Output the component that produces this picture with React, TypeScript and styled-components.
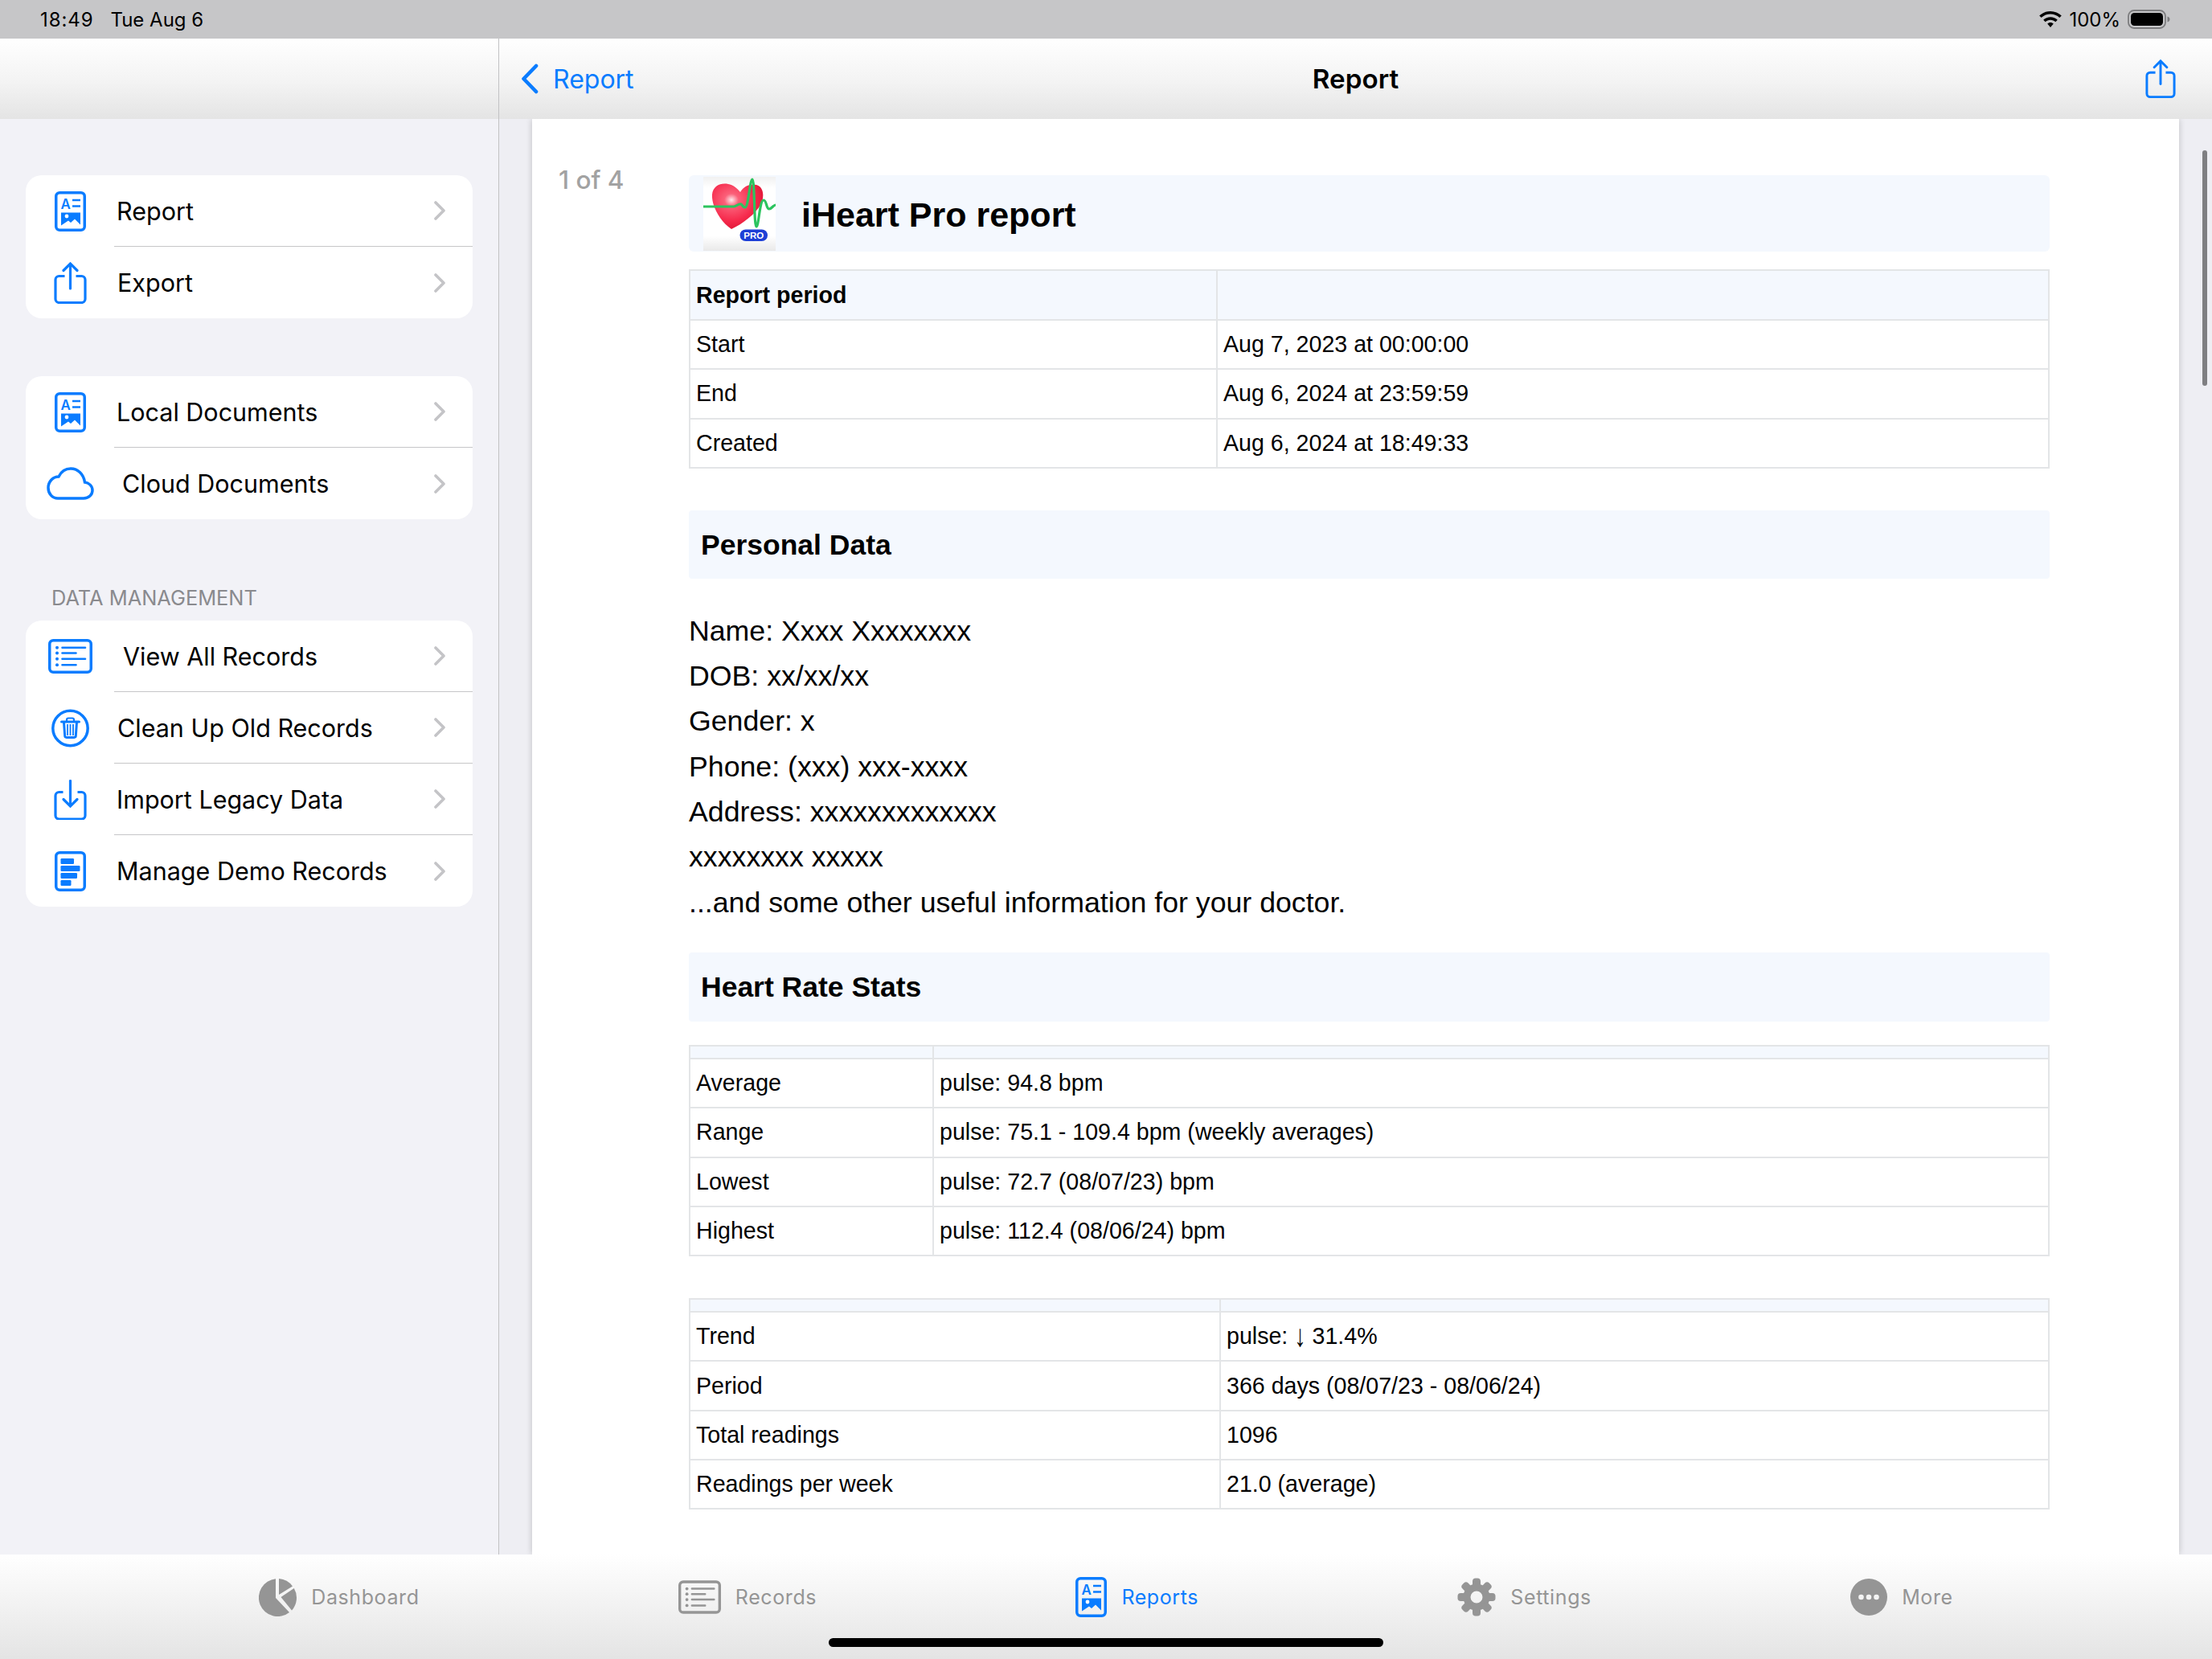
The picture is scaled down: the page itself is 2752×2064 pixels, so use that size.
import React from "react";
import styled, { createGlobalStyle } from "styled-components";

const BLUE = "#0a7cff";
const GRAY = "#959595";
const TINT = "#f4f8fe";
const RULE = "#e3e5e7";
const UI_FONT = `Inter, "Liberation Sans", sans-serif`;
const DOC_FONT = `"Liberation Sans", Arial, sans-serif`;

const GlobalStyle = createGlobalStyle`
  html, body {
    margin: 0;
    padding: 0;
    background: #f2f2f7;
  }
`;

const Screen = styled.div`
  width: 2752px;
  height: 2064px;
  display: flex;
  flex-direction: column;
  overflow: hidden;
  font-family: ${UI_FONT};
  color: #000;
`;

const StatusBar = styled.div`
  height: 48px;
  flex: none;
  background: #c6c6c8;
  display: flex;
  align-items: center;
  justify-content: space-between;
  padding: 0 52px 0 50px;
  font-size: 24px;
`;

const StatusGroup = styled.div<{ $gap: number }>`
  display: flex;
  align-items: center;
  gap: ${(p) => p.$gap}px;
`;

const StatusTime = styled.span`
  letter-spacing: 0.9px;
`;

const Panes = styled.div`
  flex: 1;
  min-height: 0;
  display: flex;
`;

const Sidebar = styled.aside`
  width: 620px;
  flex: none;
  background: #f2f2f7;
  border-right: 1px solid #c2c2c4;
`;

const NavBar = styled.div`
  height: 100px;
  background: linear-gradient(#ffffff, #f3f3f3 55%, #e4e4e4);
`;

const SideList = styled.div`
  padding: 70px 32px 0;
`;

const Card = styled.div<{ $gapAbove?: number }>`
  background: #fff;
  border-radius: 20px;
  overflow: hidden;
  margin-top: ${(p) => p.$gapAbove ?? 0}px;
`;

const SectionLabel = styled.div`
  margin: 83px 0 13px 32px;
  line-height: 30px;
  font-size: 25.4px;
  color: #8a8a8e;
`;

const Row = styled.div`
  display: flex;
  height: 89px;
`;

const IconSlot = styled.div`
  width: 110px;
  flex: none;
  display: flex;
  align-items: center;
  justify-content: center;
  color: ${BLUE};
`;

const RowBody = styled.div`
  flex: 1;
  display: flex;
  align-items: center;
  justify-content: space-between;
  padding-right: 34px;
  ${Row}:not(:last-child) & {
    border-bottom: 1px solid #c6c6c8;
  }
`;

const RowLabel = styled.span<{ $nudge: number }>`
  font-size: 30.5px;
  padding-left: ${(p) => p.$nudge}px;
`;

const Detail = styled.main`
  flex: 1;
  min-width: 0;
  display: flex;
  flex-direction: column;
`;

const DetailNav = styled(NavBar)`
  flex: none;
  display: grid;
  grid-template-columns: 1fr auto 1fr;
  align-items: center;
  padding: 0 27px;
`;

const BackLink = styled.div`
  display: flex;
  align-items: center;
  gap: 18px;
  font-size: 32px;
  color: ${BLUE};
`;

const NavTitle = styled.div`
  font-size: 33.2px;
  font-weight: 600;
`;

const NavAction = styled.div`
  justify-self: end;
  display: flex;
  margin-right: 18px;
  color: ${BLUE};
`;

const Viewport = styled.div`
  position: relative;
  flex: 1;
  min-height: 0;
  background: #eeeef3;
  padding: 0 41px;
  overflow: hidden;
`;

const Scrollbar = styled.div`
  position: absolute;
  top: 39px;
  right: 6px;
  width: 6px;
  height: 293px;
  border-radius: 3px;
  background: #7f7f82;
`;

const Sheet = styled.div`
  height: 100%;
  display: flex;
  background: #fff;
  padding-top: 61px;
  box-sizing: border-box;
  box-shadow: 0 0 8px rgba(0, 0, 0, 0.2);
  font-family: ${DOC_FONT};
`;

const PageCount = styled.div`
  width: 195px;
  flex: none;
  padding-left: 33px;
  box-sizing: border-box;
  font-family: ${UI_FONT};
  font-size: 31.5px;
  line-height: 30px;
  font-weight: 500;
  color: #a2a2a2;
`;

const ReportBody = styled.div`
  width: 1693px;
  flex: none;
  padding-top: 9px;
`;

const ReportHeader = styled.div`
  height: 95px;
  background: ${TINT};
  border-radius: 6px;
  display: flex;
  align-items: center;
  padding-left: 18px;
  gap: 32px;
`;

const ReportTitle = styled.h1`
  margin: 4px 0 0;
  font-size: 43px;
  font-weight: 700;
`;

const SectionBand = styled.h2<{ $top: number; $height: number }>`
  margin: ${(p) => p.$top}px 0 0;
  height: ${(p) => p.$height}px;
  box-sizing: border-box;
  display: flex;
  align-items: center;
  padding: 2px 0 0 15px;
  background: ${TINT};
  border-radius: 4px;
  font-size: 35.5px;
  font-weight: 700;
`;

const Details = styled.div`
  margin-top: 37px;
  font-size: 35.7px;
  line-height: 56.3px;
`;

const Table = styled.table<{ $top: number }>`
  width: 100%;
  margin-top: ${(p) => p.$top}px;
  border-collapse: collapse;
  table-layout: fixed;
  font-size: 28.6px;
`;

const HeadCell = styled.th<{ $slim?: boolean }>`
  height: ${(p) => (p.$slim ? 14 : 60)}px;
  padding: 0 7px;
  text-align: left;
  font-weight: 700;
  background: ${TINT};
  border: 2px solid ${RULE};
`;

const Cell = styled.td`
  height: 59.3px;
  padding: 0 7px;
  border: 2px solid ${RULE};
`;

const DownArrow = styled.span`
  display: inline-block;
  transform: scaleY(1.35);
`;

const TabBar = styled.nav`
  height: 130px;
  flex: none;
  position: relative;
  display: flex;
  justify-content: space-evenly;
  padding-bottom: 24px;
  box-sizing: border-box;
  align-items: center;
  background: linear-gradient(#ffffff, #e4e4e4);
`;

const Tab = styled.div<{ $active?: boolean }>`
  display: flex;
  align-items: center;
  gap: 18px;
  font-size: 25px;
  letter-spacing: 0.6px;
  color: ${(p) => (p.$active ? BLUE : GRAY)};
`;

const HomeIndicator = styled.div`
  position: absolute;
  left: 1031px;
  bottom: 15px;
  width: 690px;
  height: 11px;
  border-radius: 6px;
  background: #000;
`;

const ReportIcon = () => (
  <svg width="39" height="50" viewBox="0 0 39 50" fill="none">
    <rect x="1.75" y="1.75" width="35.5" height="46.5" rx="4.5" stroke="currentColor" strokeWidth="3.5" />
    <text x="7.5" y="21.5" fontSize="17" fontWeight="600" fontFamily={UI_FONT} fill="currentColor">
      A
    </text>
    <path d="M22 11h10M22 18.5h10" stroke="currentColor" strokeWidth="2.6" />
    <path d="M8 26.5h24v15l-7-7-5 4.5-3-2.5-9 6z" fill="currentColor" />
    <circle cx="15" cy="31" r="2.4" fill="#fff" />
  </svg>
);

const ShareIcon = ({ width = 41, height = 52 }: { width?: number; height?: number }) => (
  <svg width={width} height={height} viewBox="0 0 41 52" fill="none" stroke="currentColor" strokeWidth="3.2">
    <path d="M13.5 17.5H6.5a4.5 4.5 0 0 0-4.5 4.5v24a4.5 4.5 0 0 0 4.5 4.5h28a4.5 4.5 0 0 0 4.5-4.5V22a4.5 4.5 0 0 0-4.5-4.5h-7" />
    <path d="M20.5 33V3" strokeLinecap="round" />
    <path d="M12 10.5 20.5 2 29 10.5" strokeLinecap="round" />
  </svg>
);

const CloudIcon = () => (
  <svg width="59" height="41" viewBox="0 0 59 41" fill="none">
    <path
      d="M14 39h32c6.5 0 11-4.5 11-10 0-5.5-4.5-9.5-9.5-10C46 9 39 2 30 2c-7 0-12 4-15 10C8 12 2 18 2 26c0 7 5 13 12 13z"
      stroke="currentColor"
      strokeWidth="3.5"
    />
  </svg>
);

const ListIcon = ({ width = 55, height = 43 }: { width?: number; height?: number }) => (
  <svg width={width} height={height} viewBox="0 0 55 43" fill="none" stroke="currentColor">
    <rect x="1.75" y="1.75" width="51.5" height="39.5" rx="4.5" strokeWidth="3.5" />
    <path d="M17.5 10.7H46M17.5 17.5H34.5M17.5 24.7H46M17.5 32.3H34.5" strokeWidth="2.6" strokeLinecap="round" />
    <g fill="currentColor" stroke="none">
      <circle cx="11" cy="10.7" r="2" />
      <circle cx="11" cy="17.5" r="2" />
      <circle cx="11" cy="24.7" r="2" />
      <circle cx="11" cy="32.3" r="2" />
    </g>
  </svg>
);

const TrashIcon = () => (
  <svg width="47" height="48" viewBox="0 0 47 48" fill="none" stroke="currentColor">
    <circle cx="23.5" cy="24" r="21.7" strokeWidth="3.5" />
    <path d="M12.5 16h22" strokeWidth="3" strokeLinecap="round" />
    <path d="M19 15.5v-2a2 2 0 0 1 2-2h5a2 2 0 0 1 2 2v2" strokeWidth="2.2" />
    <path d="M15.5 16.5l1.2 17a2 2 0 0 0 2 1.900h9.600a2 2 0 0 0 2-1.900l1.200-17" strokeWidth="3" />
    <path d="M20 19v14M23.500 19v14M27 19v14" strokeWidth="1.800" />
  </svg>
);

const ImportIcon = () => (
  <svg width="41" height="50" viewBox="0 0 41 50" fill="none" stroke="currentColor" strokeWidth="3.2">
    <path d="M11.5 15.5H6.5a4.5 4.5 0 0 0-4.5 4.5v24.5a4.5 4.5 0 0 0 4.5 4.5h28a4.5 4.5 0 0 0 4.5-4.5V20a4.5 4.5 0 0 0-4.5-4.5h-5" />
    <path d="M20.5 1.5v31" strokeLinecap="round" />
    <path d="M12 24.5l8.5 8.5 8.5-8.5" strokeLinecap="round" />
  </svg>
);

const DemoIcon = () => (
  <svg width="39" height="50" viewBox="0 0 39 50" fill="none">
    <rect x="1.75" y="1.75" width="35.5" height="46.5" rx="4.5" stroke="currentColor" strokeWidth="3.5" />
    <g fill="currentColor">
      <rect x="7.5" y="9" width="16.5" height="7" rx="1.2" />
      <rect x="7.5" y="18" width="24" height="7" rx="1.2" />
      <rect x="7.5" y="27" width="20.5" height="7" rx="1.2" />
      <rect x="7.5" y="36" width="13" height="7" rx="1.2" />
    </g>
  </svg>
);

const Chevron = () => (
  <svg width="14" height="24" viewBox="0 0 14 24" fill="none">
    <path d="M2 2l10 10L2 22" stroke="#c4c4c7" strokeWidth="3.6" strokeLinecap="round" strokeLinejoin="round" />
  </svg>
);

const BackChevron = () => (
  <svg width="22" height="38" viewBox="0 0 22 38" fill="none">
    <path d="M19 3L3.5 19 19 35" stroke="currentColor" strokeWidth="4.6" strokeLinecap="round" strokeLinejoin="round" />
  </svg>
);

const WifiIcon = () => (
  <svg width="28" height="20" viewBox="0 0 28 20" fill="#000">
    <path d="M14 0C8.6 0 3.8 2.1.2 5.6L2.7 8C5.6 5.2 9.6 3.5 14 3.5s8.4 1.7 11.3 4.5l2.5-2.4C24.200 2.100 19.400 0 14 0z" />
    <path d="M14 7.200c-3.400 0-6.500 1.300-8.800 3.500l2.500 2.500c1.600-1.600 3.900-2.500 6.300-2.500s4.700.9 6.300 2.500l2.500-2.500C20.500 8.500 17.400 7.200 14 7.200z" />
    <path d="M14 14c-1.500 0-2.800.6-3.800 1.500L14 20l3.800-4.500C16.800 14.600 15.500 14 14 14z" />
  </svg>
);

const BatteryIcon = () => (
  <svg width="53" height="24" viewBox="0 0 53 24">
    <rect x="1" y="1" width="46" height="22" rx="7" fill="none" stroke="#7c7c7e" strokeWidth="1.8" />
    <rect x="4" y="4" width="40" height="16" rx="4.500" fill="#000" />
    <path d="M49.500 8.500c1.800.5 3 1.800 3 3.500s-1.200 3-3 3.500z" fill="#7c7c7e" />
  </svg>
);

const HeartLogo = () => (
  <svg width="90" height="92" viewBox="0 0 90 92">
    <defs>
      <linearGradient id="logoBack" x1="0" y1="0" x2="0" y2="1">
        <stop offset="0" stopColor="#f1f1f1" />
        <stop offset="0.15" stopColor="#ffffff" />
        <stop offset="0.8" stopColor="#ffffff" />
        <stop offset="1" stopColor="#e9e9e9" />
      </linearGradient>
      <radialGradient id="logoHeart" cx="0.38" cy="0.36" r="0.7">
        <stop offset="0" stopColor="#ffe8ec" />
        <stop offset="0.2" stopColor="#fb6079" />
        <stop offset="0.65" stopColor="#f62a4c" />
        <stop offset="1" stopColor="#dc1433" />
      </radialGradient>
    </defs>
    <rect width="90" height="92" fill="url(#logoBack)" />
    <path
      d="M35 65C20 55 10 35 11 22 12 11 22 7 31 9c6 1 11 5 15 10 4-7 12-11 20-9 8 2 10 12 7 21-5 13-23 27-38 34z"
      fill="url(#logoHeart)"
    />
    <path
      d="M0 37h38c3 0 6-4 9-3 2 1 2 4 5 4 4 0 6-35 9-35s2 59 5 59 4-33 9-33c4 0 3 11 7 11 3 0 5-5 8-5"
      fill="none"
      stroke="#2cc45f"
      strokeWidth="3.200"
      strokeLinejoin="round"
    />
    <rect x="45.500" y="65.500" width="34.500" height="14.500" rx="7.200" fill="#1d3fd6" />
    <text x="62.700" y="77" textAnchor="middle" fontSize="11.500" fontWeight="700" fontFamily={DOC_FONT} fill="#fff">
      PRO
    </text>
  </svg>
);

const PieIcon = () => (
  <svg width="47" height="47" viewBox="0 0 47 47" fill="currentColor">
    <path d="M21 .2V24L38 42A23.500 23.500 0 1 1 21 .2z" />
    <path d="M25 .1V20L42 9.500A23.500 23.500 0 0 0 25 .1z" />
    <path d="M43.800 12 27.500 23 41 39.500A23.500 23.500 0 0 0 43.800 12z" />
  </svg>
);

const GearIcon = () => (
  <svg width="48" height="48" viewBox="0 0 48 48" fill="currentColor">
    <circle cx="24" cy="24" r="12" fill="none" stroke="currentColor" strokeWidth="9" />
    {[0, 45, 90, 135, 180, 225, 270, 315].map((angle) => (
      <rect key={angle} x="19" y="0.500" width="10" height="12" rx="3.800" transform={`rotate(${angle} 24 24)`} />
    ))}
  </svg>
);

const MoreIcon = () => (
  <svg width="46" height="46" viewBox="0 0 46 46">
    <circle cx="23" cy="23" r="23" fill="currentColor" />
    <g fill="#f4f4f4">
      <circle cx="13.500" cy="23" r="3.300" />
      <circle cx="23" cy="23" r="3.300" />
      <circle cx="32.500" cy="23" r="3.300" />
    </g>
  </svg>
);

type SideRow = { icon: React.ReactNode; label: string; nudge: number };

const primaryRows: SideRow[] = [
  { icon: <ReportIcon />, label: "Report", nudge: 3 },
  { icon: <ShareIcon />, label: "Export", nudge: 4 },
];

const documentRows: SideRow[] = [
  { icon: <ReportIcon />, label: "Local Documents", nudge: 3 },
  { icon: <CloudIcon />, label: "Cloud Documents", nudge: 10 },
];

const dataRows: SideRow[] = [
  { icon: <ListIcon />, label: "View All Records", nudge: 11 },
  { icon: <TrashIcon />, label: "Clean Up Old Records", nudge: 4 },
  { icon: <ImportIcon />, label: "Import Legacy Data", nudge: 3 },
  { icon: <DemoIcon />, label: "Manage Demo Records", nudge: 3 },
];

const SideCard = ({ rows, gapAbove }: { rows: SideRow[]; gapAbove?: number }) => (
  <Card $gapAbove={gapAbove}>
    {rows.map((row) => (
      <Row key={row.label}>
        <IconSlot>{row.icon}</IconSlot>
        <RowBody>
          <RowLabel $nudge={row.nudge}>{row.label}</RowLabel>
          <Chevron />
        </RowBody>
      </Row>
    ))}
  </Card>
);

const StatTable = ({
  top,
  firstCol,
  rows,
}: {
  top: number;
  firstCol: number;
  rows: [string, React.ReactNode][];
}) => (
  <Table $top={top}>
    <colgroup>
      <col width={firstCol} />
      <col />
    </colgroup>
    <thead>
      <tr>
        <HeadCell $slim />
        <HeadCell $slim />
      </tr>
    </thead>
    <tbody>
      {rows.map(([name, value]) => (
        <tr key={name}>
          <Cell>{name}</Cell>
          <Cell>{value}</Cell>
        </tr>
      ))}
    </tbody>
  </Table>
);

const App = () => {
  return (
    <Screen>
      <GlobalStyle />
      <StatusBar>
        <StatusGroup $gap={21}>
          <StatusTime>18:49</StatusTime>
          <span>Tue Aug 6</span>
        </StatusGroup>
        <StatusGroup $gap={9}>
          <WifiIcon />
          <span>100%</span>
          <BatteryIcon />
        </StatusGroup>
      </StatusBar>
      <Panes>
        <Sidebar>
          <NavBar />
          <SideList>
            <SideCard rows={primaryRows} />
            <SideCard rows={documentRows} gapAbove={72} />
            <SectionLabel>DATA MANAGEMENT</SectionLabel>
            <SideCard rows={dataRows} />
          </SideList>
        </Sidebar>
        <Detail>
          <DetailNav>
            <BackLink>
              <BackChevron />
              Report
            </BackLink>
            <NavTitle>Report</NavTitle>
            <NavAction>
              <ShareIcon width={38} height={48} />
            </NavAction>
          </DetailNav>
          <Viewport>
            <Sheet>
              <PageCount>1 of 4</PageCount>
              <ReportBody>
                <ReportHeader>
                  <HeartLogo />
                  <ReportTitle>iHeart Pro report</ReportTitle>
                </ReportHeader>
                <Table $top={22}>
                  <colgroup>
                    <col width={656} />
                    <col />
                  </colgroup>
                  <thead>
                    <tr>
                      <HeadCell>Report period</HeadCell>
                      <HeadCell />
                    </tr>
                  </thead>
                  <tbody>
                    <tr>
                      <Cell>Start</Cell>
                      <Cell>Aug 7, 2023 at 00:00:00</Cell>
                    </tr>
                    <tr>
                      <Cell>End</Cell>
                      <Cell>Aug 6, 2024 at 23:59:59</Cell>
                    </tr>
                    <tr>
                      <Cell>Created</Cell>
                      <Cell>Aug 6, 2024 at 18:49:33</Cell>
                    </tr>
                  </tbody>
                </Table>
                <SectionBand $top={52} $height={85}>
                  Personal Data
                </SectionBand>
                <Details>
                  <div>Name: Xxxx Xxxxxxxx</div>
                  <div>DOB: xx/xx/xx</div>
                  <div>Gender: x</div>
                  <div>Phone: (xxx) xxx-xxxx</div>
                  <div>Address: xxxxxxxxxxxxx</div>
                  <div>xxxxxxxx xxxxx</div>
                  <div>...and some other useful information for your doctor.</div>
                </Details>
                <SectionBand $top={34} $height={86}>
                  Heart Rate Stats
                </SectionBand>
                <StatTable
                  top={29}
                  firstCol={303}
                  rows={[
                    ["Average", "pulse: 94.8 bpm"],
                    ["Range", "pulse: 75.1 - 109.4 bpm (weekly averages)"],
                    ["Lowest", "pulse: 72.7 (08/07/23) bpm"],
                    ["Highest", "pulse: 112.4 (08/06/24) bpm"],
                  ]}
                />
                <StatTable
                  top={52}
                  firstCol={660}
                  rows={[
                    [
                      "Trend",
                      <>
                        pulse: <DownArrow>↓</DownArrow> 31.4%
                      </>,
                    ],
                    ["Period", "366 days (08/07/23 - 08/06/24)"],
                    ["Total readings", "1096"],
                    ["Readings per week", "21.0 (average)"],
                  ]}
                />
              </ReportBody>
            </Sheet>
            <Scrollbar />
          </Viewport>
        </Detail>
      </Panes>
      <TabBar>
        <Tab>
          <PieIcon />
          Dashboard
        </Tab>
        <Tab>
          <ListIcon width={53} height={42} />
          Records
        </Tab>
        <Tab $active>
          <ReportIcon />
          Reports
        </Tab>
        <Tab>
          <GearIcon />
          Settings
        </Tab>
        <Tab>
          <MoreIcon />
          More
        </Tab>
        <HomeIndicator />
      </TabBar>
    </Screen>
  );
};

export default App;
